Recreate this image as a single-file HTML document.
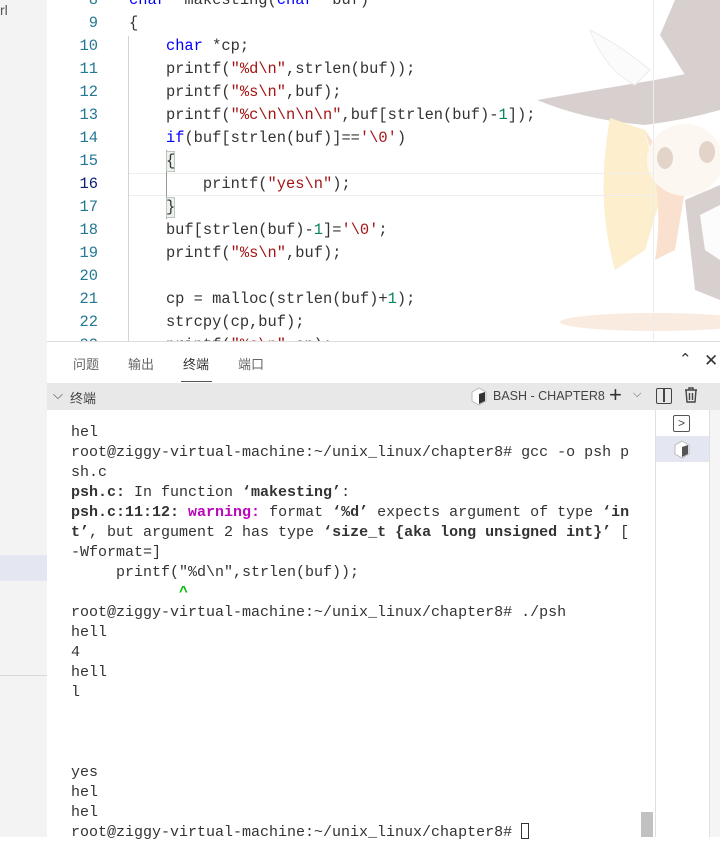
<!DOCTYPE html>
<html><head><meta charset="utf-8"><style>
*{margin:0;padding:0;box-sizing:border-box}
body{width:720px;height:837px;overflow:hidden;background:#fff;position:relative;font-family:"Liberation Sans","Noto Sans CJK SC",sans-serif}
.abs{position:absolute}
.code{font-family:"Liberation Mono",monospace;font-size:15.4px;white-space:pre;color:#333}
.ln{position:absolute;left:47px;width:51px;text-align:right;color:#237893;font-family:"Liberation Mono",monospace;font-size:15.4px;line-height:23px}
.cl{position:absolute;left:129px;line-height:23px}
.k{color:#0000ff}.s{color:#a31515}.n{color:#098658}
.t{font-family:"Liberation Mono",monospace;font-size:15px;white-space:pre;color:#333;line-height:20px;position:absolute;left:71px}
b{font-weight:bold}
</style></head><body>
<div class="abs" style="left:0;top:0;width:47px;height:837px;background:#f3f3f3"></div>
<div class="abs" style="left:0;top:2px;font-size:14px;color:#555">rl</div>
<div class="abs" style="left:0;top:555px;width:47px;height:26px;background:#e4e6f1"></div>
<div class="abs" style="left:0;top:675px;width:47px;height:1px;background:#d8d8d8"></div>

<svg class="abs" style="left:535px;top:0;opacity:0.55" width="185" height="340">
<ellipse cx="120" cy="322" rx="95" ry="9" fill="#f7dcc8"/>
<path d="M140 0 L185 0 L185 70 L150 75 L125 35Z" fill="#b8aaa8"/>
<path d="M2 100 Q60 90 120 80 Q160 72 185 68 L185 110 Q150 120 110 125 Q50 120 2 100Z" fill="#b8aaa8"/>
<path d="M55 30 Q85 45 115 70 L100 85 Q70 70 55 30Z" fill="#f8f8f8" stroke="#ddd"/>
<path d="M75 118 Q60 200 80 270 L110 250 L125 200 L110 130Z" fill="#fde2a6"/>
<path d="M110 130 Q130 200 120 260 L140 250 L150 190Z" fill="#f7c7a8"/>
<ellipse cx="150" cy="160" rx="38" ry="36" fill="#fdf1e8"/>
<ellipse cx="130" cy="158" rx="8" ry="11" fill="#cdb2a0"/>
<ellipse cx="172" cy="152" rx="8" ry="11" fill="#cdb2a0"/>
<path d="M150 200 L185 185 L185 300 L160 290Z" fill="#b8aaa8"/>
<path d="M165 215 L185 205 L185 260 L170 250Z" fill="#fbfbfb"/>
</svg>
<div class="abs" style="left:653px;top:0;width:1px;height:341px;background:#ececec"></div>

<div class="abs" style="left:129px;top:173px;width:524px;height:23px;border-top:1px solid #eee;border-bottom:1px solid #eee"></div>
<div class="abs" style="left:128px;top:36px;width:1px;height:305px;background:#d3d3d3"></div>
<div class="abs" style="left:166px;top:150px;width:9px;height:69px;border-left:1px solid #999"></div>
<div class="abs" style="left:166px;top:151px;width:9px;height:21px;border:1px solid #b9c6b9;background:#eef2ee"></div>
<div class="abs" style="left:166px;top:197px;width:9px;height:21px;border:1px solid #b9c6b9;background:#eef2ee"></div>

<div class="code">
<div class="ln" style="top:-11px">8</div><div class="cl" style="top:-11px"><span class="k">char</span> *makesting(<span class="k">char</span> *buf)</div>
<div class="ln" style="top:12px">9</div><div class="cl" style="top:12px">{</div>
<div class="ln" style="top:35px">10</div><div class="cl" style="top:35px">    <span class="k">char</span> *cp;</div>
<div class="ln" style="top:58px">11</div><div class="cl" style="top:58px">    printf(<span class="s">"%d\n"</span>,strlen(buf));</div>
<div class="ln" style="top:81px">12</div><div class="cl" style="top:81px">    printf(<span class="s">"%s\n"</span>,buf);</div>
<div class="ln" style="top:104px">13</div><div class="cl" style="top:104px">    printf(<span class="s">"%c\n\n\n\n"</span>,buf[strlen(buf)-<span class="n">1</span>]);</div>
<div class="ln" style="top:127px">14</div><div class="cl" style="top:127px">    <span class="k">if</span>(buf[strlen(buf)]==<span class="s">'\0'</span>)</div>
<div class="ln" style="top:150px">15</div><div class="cl" style="top:150px">    {</div>
<div class="ln" style="top:173px;color:#0b216f">16</div><div class="cl" style="top:173px">        printf(<span class="s">"yes\n"</span>);</div>
<div class="ln" style="top:196px">17</div><div class="cl" style="top:196px">    }</div>
<div class="ln" style="top:219px">18</div><div class="cl" style="top:219px">    buf[strlen(buf)-<span class="n">1</span>]=<span class="s">'\0'</span>;</div>
<div class="ln" style="top:242px">19</div><div class="cl" style="top:242px">    printf(<span class="s">"%s\n"</span>,buf);</div>
<div class="ln" style="top:265px">20</div>
<div class="ln" style="top:288px">21</div><div class="cl" style="top:288px">    cp = malloc(strlen(buf)+<span class="n">1</span>);</div>
<div class="ln" style="top:311px">22</div><div class="cl" style="top:311px">    strcpy(cp,buf);</div>
<div class="ln" style="top:334px">23</div><div class="cl" style="top:334px">    printf(<span class="s">"%s\n"</span>,cp);</div>
</div>

<div class="abs" style="left:47px;top:341px;width:673px;height:496px;background:#fff;border-top:1px solid #ddd"></div>
<div class="abs" style="left:73px;top:354px;font-size:13px;color:#666">问题</div>
<div class="abs" style="left:128px;top:354px;font-size:13px;color:#666">输出</div>
<div class="abs" style="left:183px;top:354px;font-size:13px;color:#333">终端</div>
<div class="abs" style="left:181px;top:381px;width:31px;height:1px;background:#555"></div>
<div class="abs" style="left:238px;top:354px;font-size:13px;color:#666">端口</div>
<div class="abs" style="left:679px;top:350px;font-size:15px;color:#333">&#x2303;</div>
<div class="abs" style="left:704px;top:351px;font-size:17px;color:#333">✕</div>

<div class="abs" style="left:47px;top:383px;width:673px;height:27px;background:#e8e8e8"></div>
<div class="abs" style="left:53px;top:387px;font-size:13px;color:#444">⌵</div>
<div class="abs" style="left:70px;top:388px;font-size:13px;color:#444">终端</div>
<svg class="abs" style="left:470px;top:387px" width="18" height="20"><path d="M9 1 L16 5 L16 14 L9 18 L2 14 L2 5Z" fill="#fff" stroke="#bbb"/><path d="M9 7 L15 5 L15 14 L9 17Z" fill="#333"/></svg>
<div class="abs" style="left:493px;top:389px;font-size:12.5px;color:#444">BASH - CHAPTER8</div>
<div class="abs" style="left:609px;top:382px;font-size:22px;color:#333;font-weight:300">+</div>
<div class="abs" style="left:633px;top:388px;font-size:11px;color:#555">⌵</div>
<div class="abs" style="left:656px;top:388px;width:16px;height:16px;border:1.5px solid #444;border-radius:2px"><div style="position:absolute;left:6px;top:0;width:1.5px;height:13px;background:#444"></div></div>
<svg class="abs" style="left:683px;top:386px" width="16" height="18"><path d="M2 4 H14 M6 4 V2 H10 V4 M3 4 L4 16 H12 L13 4 M6.5 7V14 M9.5 7V14" fill="none" stroke="#444" stroke-width="1.4"/></svg>

<div class="abs" style="left:655px;top:410px;width:55px;height:427px;border-left:1px solid #e0e0e0;border-right:1px solid #e0e0e0"></div>
<div class="abs" style="left:710px;top:410px;width:10px;height:427px;background:#f5f5f5"></div>
<div class="abs" style="left:673px;top:415px;width:17px;height:17px;border:1.2px solid #555;border-radius:2px;font-size:12px;line-height:14px;text-align:center;color:#444">&gt;</div>
<div class="abs" style="left:656px;top:436px;width:53px;height:26px;background:#e4e6f1"></div>
<svg class="abs" style="left:673px;top:440px" width="18" height="20"><path d="M9 1 L16 5 L16 14 L9 18 L2 14 L2 5Z" fill="#fff" stroke="#bbb"/><path d="M9 7 L15 5 L15 14 L9 17Z" fill="#555"/></svg>
<div class="abs" style="left:641px;top:812px;width:12px;height:25px;background:#c1c1c1"></div>

<div class="t" style="top:423px">hel</div>
<div class="t" style="top:443px">root@ziggy-virtual-machine:~/unix_linux/chapter8# gcc -o psh p</div>
<div class="t" style="top:463px">sh.c</div>
<div class="t" style="top:483px"><b>psh.c:</b> In function <b>‘makesting’</b>:</div>
<div class="t" style="top:503px"><b>psh.c:11:12:</b> <b style="color:#bc05bc">warning:</b> format <b>‘%d’</b> expects argument of type <b>‘in</b></div>
<div class="t" style="top:523px"><b>t’</b>, but argument 2 has type <b>‘size_t {aka long unsigned int}’</b> [</div>
<div class="t" style="top:543px">-Wformat=]</div>
<div class="t" style="top:563px">     printf("%d\n",strlen(buf));</div>
<div class="t" style="top:583px;color:#00bc00">            <b>^</b></div>
<div class="t" style="top:603px">root@ziggy-virtual-machine:~/unix_linux/chapter8# ./psh</div>
<div class="t" style="top:623px">hell</div>
<div class="t" style="top:643px">4</div>
<div class="t" style="top:663px">hell</div>
<div class="t" style="top:683px">l</div>
<div class="t" style="top:763px">yes</div>
<div class="t" style="top:783px">hel</div>
<div class="t" style="top:803px">hel</div>
<div class="t" style="top:823px">root@ziggy-virtual-machine:~/unix_linux/chapter8# <span style="display:inline-block;width:8px;height:16px;border:1px solid #333;vertical-align:-3px"></span></div>
</body></html>
